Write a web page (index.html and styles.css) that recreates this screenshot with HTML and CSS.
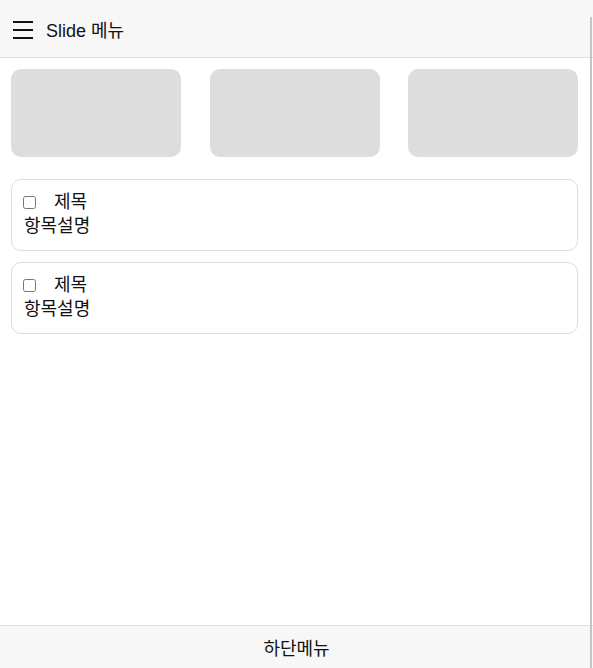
FILE: index.html
```html
<!DOCTYPE html>
<html>
<head>
    <meta charset="UTF-8">
    <title>Slide 메뉴</title>
    <link rel="stylesheet" href="styles.css">
</head>
<body>
    <div class="app">
        <div class="header">
            <button class="menu-btn">
                <svg viewBox="0 0 20 18" width="20" height="18">
                    <path d="M0 1H20M0 9H20M0 17H20" stroke="#111" stroke-width="2"/>
                </svg>
            </button>
            <h1>Slide 메뉴</h1>
        </div>

        <div class="main">
            <div class="tiles">
                <div class="tile"></div>
                <div class="tile"></div>
                <div class="tile"></div>
            </div>

            <ul class="list">
                <li class="item">
                    <label class="item-title"><input type="checkbox"> 제목</label>
                    <div class="item-desc">항목설명</div>
                </li>
                <li class="item">
                    <label class="item-title"><input type="checkbox"> 제목</label>
                    <div class="item-desc">항목설명</div>
                </li>
            </ul>
        </div>

        <div class="footer">하단메뉴</div>
    </div>
</body>
</html>
```

FILE: styles.css
```css
:root {
    --bar: #f7f7f7;
    --border: #dddddd;
    --tile: #dddddd;
    --text: #111111;
}

body {
    margin: 0;
    font-family: 'Liberation Sans', 'Noto Sans CJK KR', sans-serif;
    color: var(--text);
    background: #ffffff;
}

body::after {
    content: '';
    position: fixed;
    top: 17px;
    right: 1px;
    bottom: 0;
    width: 2px;
    background: #c4c4c4;
}

.app {
    height: 100vh;
    display: flex;
    flex-direction: column;
}

.header {
    display: flex;
    align-items: center;
    height: 57px;
    padding: 0 13px;
    gap: 13px;
    background: var(--bar);
    border-bottom: 1px solid var(--border);
}

.menu-btn {
    border: none;
    background: none;
    padding: 0;
    display: flex;
    margin-top: 2px;
}

h1 {
    margin: 0;
    font-size: 18px;
    font-weight: normal;
}

.main {
    flex: 1;
    padding: 11px 15px 11px 11px;
}

.tiles {
    display: flex;
    justify-content: space-between;
}

.tile {
    width: 170px;
    height: 88px;
    background: var(--tile);
    border-radius: 10px;
}

.list {
    list-style: none;
    margin: 22px 0 0;
    padding: 0;
    display: flex;
    flex-direction: column;
    gap: 11px;
}

.item {
    border: 1px solid var(--border);
    border-radius: 10px;
    padding: 10px 12px 12px;
    font-size: 18px;
    line-height: 24px;
}

.item-title {
    display: flex;
    align-items: center;
    gap: 18px;
}

.item-title input {
    margin: 0 0 0 -1px;
    width: 13px;
    height: 13px;
}

.footer {
    height: 42px;
    display: flex;
    align-items: center;
    justify-content: center;
    background: var(--bar);
    border-top: 1px solid var(--border);
    font-size: 18px;
}
```
